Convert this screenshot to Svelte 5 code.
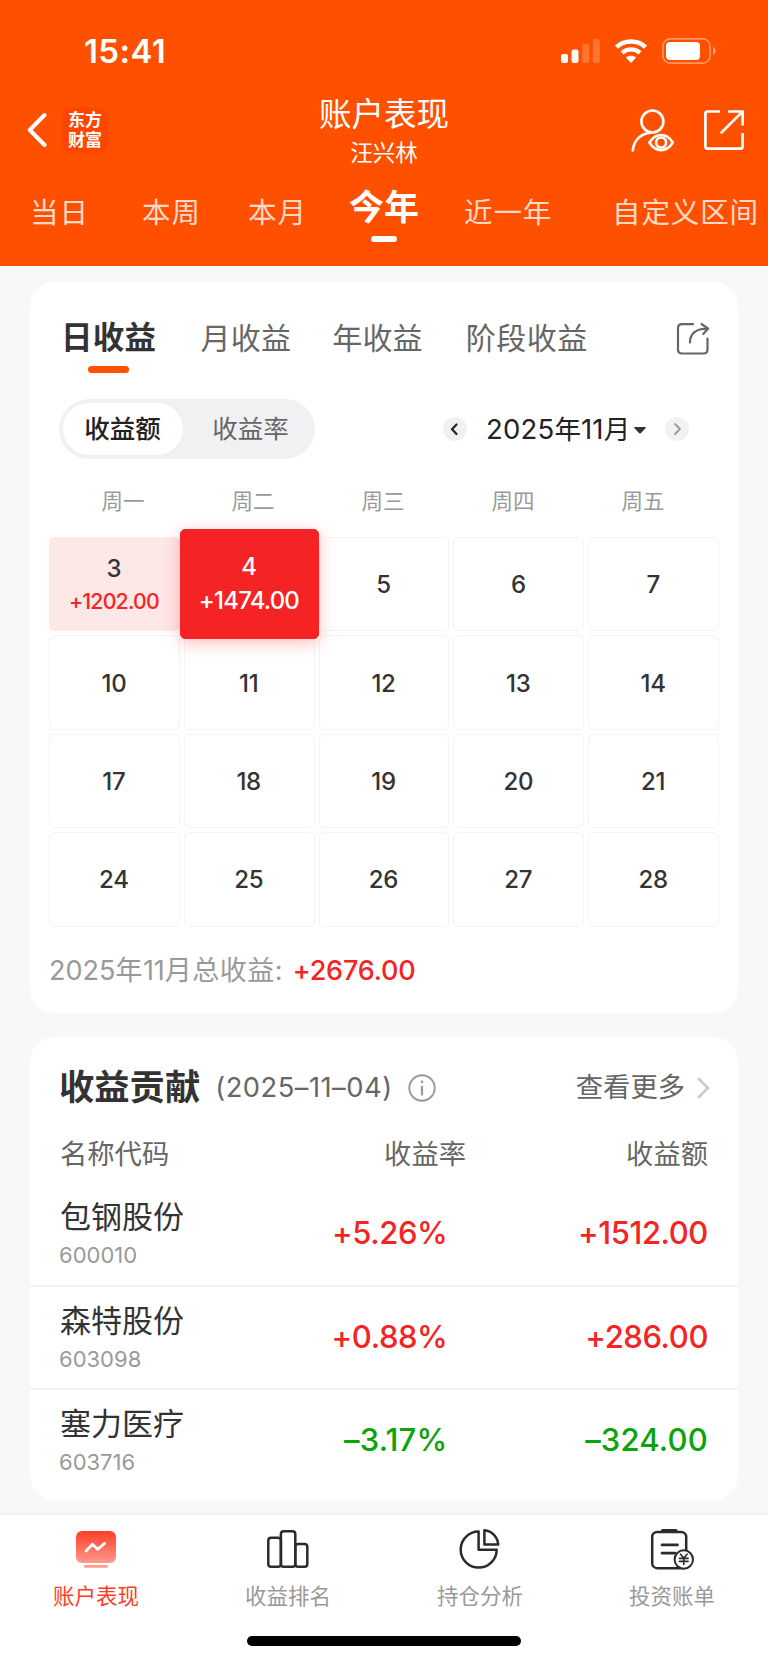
<script lang="ts">
  type Day = { day: number; amount?: string };
  type Stock = { name: string; code: string; rate: string; amount: string };

  const ranges = ['当日', '本周', '本月', '今年', '近一年', '自定义区间'];
  const periods = ['日收益', '月收益', '年收益', '阶段收益'];
  const modes = ['收益额', '收益率'];
  const weekdays = ['周一', '周二', '周三', '周四', '周五'];

  const days: Day[] = [3, 10, 17, 24].flatMap((start) =>
    Array.from({ length: 5 }, (_, i) => ({ day: start + i }))
  );
  days[0].amount = '+1202.00';
  days[1].amount = '+1474.00';

  const stocks: Stock[] = [
    { name: '包钢股份', code: '600010', rate: '+5.26%', amount: '+1512.00' },
    { name: '森特股份', code: '603098', rate: '+0.88%', amount: '+286.00' },
    { name: '塞力医疗', code: '603716', rate: '–3.17%', amount: '–324.00' }
  ];

  let range = $state('今年');
  let period = $state('日收益');
  let mode = $state('收益额');
  let selectedDay = $state(4);
</script>

<div class="screen">
  <header class="header">
    <div class="status-bar">
      <span class="time">15:41</span>
      <div class="status-icons">
        <svg class="signal" width="39" height="24" viewBox="0 0 39 24" fill="#fff">
          <rect x="0" y="15" width="7" height="9" rx="2" />
          <rect x="10.5" y="10.5" width="7" height="13.5" rx="2" />
          <rect x="21.2" y="5" width="7" height="19" rx="2" opacity="0.2" />
          <rect x="31.8" y="0" width="7" height="24" rx="2" opacity="0.2" />
        </svg>
        <svg class="wifi" width="34" height="24" viewBox="0 0 34 24">
          <path d="M2.5 8.2C10.5 0.6 23.5 0.6 31.5 8.2" fill="none" stroke="#fff" stroke-width="4.6" />
          <path d="M8 13.8C13.2 9.2 20.8 9.2 26 13.8" fill="none" stroke="#fff" stroke-width="4.4" />
          <path d="M11.9 18.6C14.8 16 19.2 16 22.1 18.6L17 24Z" fill="#fff" />
        </svg>
        <svg class="battery" width="55" height="26" viewBox="0 0 55 26">
          <rect x="0.9" y="0.9" width="47.2" height="24.2" rx="7.2" fill="none" stroke="#fff" stroke-opacity="0.4" stroke-width="1.6" />
          <rect x="4" y="4" width="34" height="18" rx="4" fill="#fff" />
          <path d="M51 9C54.6 10.4 54.6 15.6 51 17Z" fill="#fff" opacity="0.45" />
        </svg>
      </div>
    </div>

    <div class="nav">
      <div class="nav-side">
        <svg class="back" width="20" height="36" viewBox="0 0 20 36" fill="none" stroke="#fff" stroke-width="4" stroke-linecap="round" stroke-linejoin="round">
          <path d="M17.5 3L2.8 18L17.5 33" />
        </svg>
        <div class="logo">
          <span>东方</span>
          <span>财富</span>
        </div>
      </div>
      <div class="nav-title">
        <h1>账户表现</h1>
        <p>汪兴林</p>
      </div>
      <div class="nav-side right">
        <svg width="44" height="44" viewBox="0 0 44 44" fill="none" stroke="#fff" stroke-width="2.6" stroke-linecap="round">
          <circle cx="21.4" cy="13.5" r="11" />
          <path d="M1.8 42.5C2.6 33 9.1 25.5 19.6 24.6" />
          <path d="M18.4 34.5C24.6 24.4 35.6 24.4 41.8 34.5C35.6 44.6 24.6 44.6 18.4 34.5Z" stroke-linejoin="round" />
          <circle cx="30.1" cy="34.5" r="5" />
        </svg>
        <svg class="open" width="40" height="40" viewBox="0 0 40 40" fill="none" stroke="#fff" stroke-width="2.7" stroke-linecap="butt">
          <path d="M16 1.5H3.5Q1.4 1.5 1.4 3.5V36.5Q1.4 38.6 3.5 38.6H36.5Q38.6 38.6 38.6 36.5V23" />
          <path d="M24 1.5H38.6V15.5" />
          <path d="M37.5 2.6L17.5 22.5" stroke-linecap="round" />
        </svg>
      </div>
    </div>

    <nav class="ranges">
      {#each ranges as item}
        <button class="range" class:active={range === item} onclick={() => (range = item)}>{item}</button>
      {/each}
    </nav>
  </header>

  <main class="content">
    <section class="card calendar-card">
      <div class="periods">
        {#each periods as item}
          <button class="period" class:active={period === item} onclick={() => (period = item)}>{item}</button>
        {/each}
        <svg class="share" width="34" height="34" viewBox="0 0 34 34" fill="none" stroke="#666" stroke-width="2.2" stroke-linecap="round" stroke-linejoin="round">
          <path d="M17 2.2H6Q2 2.2 2 6.2V27.5Q2 31.5 6 31.5H27.5Q31.5 31.5 31.5 27.5V16.5" />
          <path d="M14 20.5C14 11.5 20 6.6 31.5 6.6" />
          <path d="M25.5 2L32.2 6.6L27.2 12" />
        </svg>
      </div>

      <div class="toolbar">
        <div class="segment">
          {#each modes as item}
            <button class="segment-item" class:active={mode === item} onclick={() => (mode = item)}>{item}</button>
          {/each}
        </div>
        <div class="month">
          <button class="month-btn" aria-label="上个月">
            <svg width="24" height="24" viewBox="0 0 24 24" fill="none" stroke="#222" stroke-width="2.2" stroke-linecap="round" stroke-linejoin="round">
              <path d="M13.5 7.5L9 12.2L13.5 17" />
            </svg>
          </button>
          <span class="month-label">2025<i>年</i>11<i>月</i></span>
          <svg class="caret" width="12" height="7" viewBox="0 0 12 7"><path d="M1 0H11Q12.4 0.3 11.5 1.3L7 6Q6 7 5 6L0.5 1.3Q-0.4 0.3 1 0Z" fill="#333" /></svg>
          <button class="month-btn" aria-label="下个月">
            <svg width="24" height="24" viewBox="0 0 24 24" fill="none" stroke="#999" stroke-width="1.8" stroke-linecap="round" stroke-linejoin="round">
              <path d="M10 7L15 12L10 17" />
            </svg>
          </button>
        </div>
      </div>

      <div class="weekdays">
        {#each weekdays as name}
          <span>{name}</span>
        {/each}
      </div>

      <div class="days">
        {#each days as item}
          <button
            class="day"
            class:gain={item.amount}
            class:selected={selectedDay === item.day}
            onclick={() => (selectedDay = item.day)}
          >
            <span class="num">{item.day}</span>
            {#if item.amount}
              <span class="amount">{item.amount}</span>
            {/if}
          </button>
        {/each}
      </div>

      <p class="total"><span>2025<i>年</i>11<i>月总收益</i>:</span><strong>+2676.00</strong></p>
    </section>

    <section class="card stock-card">
      <div class="stock-title">
        <h2>收益贡献</h2>
        <span class="date">(2025–11–04)</span>
        <svg class="info" width="28" height="28" viewBox="0 0 28 28" fill="none" stroke="#999" stroke-width="1.9">
          <circle cx="14" cy="14" r="12.7" />
          <path d="M14 12V21.5" stroke-width="2.2" />
          <circle cx="14" cy="7.8" r="1.4" fill="#999" stroke="none" />
        </svg>
        <span class="more">查看更多</span>
        <svg class="more-arrow" width="13" height="22" viewBox="0 0 13 22" fill="none" stroke="#ccc" stroke-width="2.8">
          <path d="M1.2 1.2L10.8 11L1.2 20.8" />
        </svg>
      </div>

      <div class="row head">
        <span>名称代码</span>
        <span class="cell">收益率</span>
        <span class="cell">收益额</span>
      </div>

      {#each stocks as stock}
        <div class="row" class:loss={stock.rate.startsWith('–')}>
          <div class="stock">
            <div class="name">{stock.name}</div>
            <div class="code">{stock.code}</div>
          </div>
          <span class="cell value">{stock.rate}</span>
          <span class="cell value">{stock.amount}</span>
        </div>
      {/each}
    </section>
  </main>

  <footer class="tabbar">
    <div class="tabs">
      <div class="tab active">
        <svg width="44" height="44" viewBox="0 0 44 44">
          <defs>
            <linearGradient id="tab-fill" x1="0" y1="0" x2="0" y2="1">
              <stop offset="0" stop-color="#ff3d28" />
              <stop offset="1" stop-color="#ff9a8c" />
            </linearGradient>
          </defs>
          <rect x="2" y="4" width="40" height="32" rx="6" fill="url(#tab-fill)" />
          <rect x="10" y="38" width="24" height="2.8" rx="1.4" fill="#ff9a8c" />
          <path d="M12 24L18.5 17.3L23.5 22.3L30.5 16.5" fill="none" stroke="#fff" stroke-width="2.8" stroke-linecap="round" stroke-linejoin="round" />
        </svg>
        <span>账户表现</span>
      </div>
      <div class="tab">
        <svg width="44" height="44" viewBox="0 0 44 44" fill="none" stroke="#2b2b2b" stroke-width="2.5">
          <rect x="2.3" y="10.7" width="12.6" height="29" rx="2.8" />
          <rect x="14.9" y="4.3" width="14.4" height="35.4" rx="2.8" />
          <rect x="29.3" y="17" width="12" height="22.7" rx="2.8" />
        </svg>
        <span>收益排名</span>
      </div>
      <div class="tab">
        <svg width="44" height="44" viewBox="0 0 44 44" fill="none" stroke="#2b2b2b" stroke-width="2.5" stroke-linejoin="round">
          <path d="M20.6 4.6V22.7H38.7A18 18 0 1 1 20.6 4.6Z" />
          <path d="M26.4 3.2A15.4 15.4 0 0 1 40.2 17.6H26.4Z" />
        </svg>
        <span>持仓分析</span>
      </div>
      <div class="tab">
        <svg width="44" height="44" viewBox="0 0 44 44" fill="none" stroke="#2b2b2b" stroke-width="2.5" stroke-linecap="round">
          <rect x="2.2" y="5" width="34" height="36.2" rx="5" />
          <path d="M12.5 3.6H26" stroke-width="3" />
          <path d="M12 17.9H27.5M12 26.2H25" stroke-width="2.7" />
          <circle cx="33.8" cy="32.5" r="9.2" fill="#fff" stroke-width="2" />
          <path d="M30.5 27.2L33.8 31L37.1 27.2M33.8 31V37.5M29.5 31.4H38.1M29.5 34.4H38.1" stroke-width="1.6" />
        </svg>
        <span>投资账单</span>
      </div>
    </div>
    <div class="home-indicator"></div>
  </footer>
</div>

<style>
  :global(body) {
    margin: 0;
  }

  .screen {
    width: 768px;
    height: 1663px;
    overflow: hidden;
    display: flex;
    flex-direction: column;
    background: #f6f8fa;
    color: #333;
    font-family: Inter, 'Noto Sans CJK SC', sans-serif;
    font-weight: 370;
  }

  .screen :is(h1, h2, p) {
    margin: 0;
    font-weight: inherit;
  }

  .screen i {
    font-style: normal;
  }

  button {
    border: 0;
    padding: 0;
    background: none;
    color: inherit;
    font: inherit;
    white-space: nowrap;
  }

  svg {
    display: block;
    flex: none;
  }

  /* Header */
  .header {
    height: 266px;
    flex: none;
    background: #ff5000;
    color: #fff;
  }

  .status-bar {
    display: flex;
    justify-content: space-between;
    height: 64px;
    padding: 38px 51px 0 84px;
    box-sizing: border-box;
  }

  .time {
    font-size: 33px;
    line-height: 27px;
    letter-spacing: 0.4px;
    font-weight: 600;
  }

  .status-icons {
    display: flex;
    align-items: center;
  }

  .wifi {
    margin-left: 14px;
  }

  .battery {
    margin-left: 14px;
  }

  .nav {
    display: flex;
    justify-content: space-between;
    height: 106px;
    padding: 0 24px;
  }

  .nav-side {
    display: flex;
    align-items: center;
    width: 200px;
    height: 46px;
    margin-top: 43px;
  }

  .nav-side.right {
    justify-content: flex-end;
  }

  .back {
    margin-left: 3px;
  }

  .open {
    margin-left: 29px;
  }

  .logo {
    display: flex;
    flex-direction: column;
    align-items: center;
    width: 46px;
    height: 46px;
    margin-left: 15px;
    padding-top: 4px;
    box-sizing: border-box;
    border-radius: 9px;
    background: #ff4600;
    font-size: 17px;
    font-weight: 700;
    line-height: 19.5px;
  }

  .nav-title {
    text-align: center;
    padding-top: 31px;
  }

  .nav-title h1 {
    font-size: 32.5px;
    line-height: 40px;
  }

  .nav-title p {
    font-size: 22.5px;
    line-height: 36px;
  }

  .ranges {
    display: grid;
    grid-template-columns: 112px 106px 101px 115px 148px auto;
    padding-left: 30px;
    height: 96px;
  }

  .range {
    padding-top: 23px;
    height: 63px;
    font-size: 28.5px;
    line-height: 40px;
    letter-spacing: 0.9px;
    text-align: left;
    color: rgba(255, 255, 255, 0.8);
  }

  .range.active {
    width: 70px;
    padding-top: 17px;
    height: 72px;
    font-size: 35px;
    font-weight: 700;
    letter-spacing: 0;
    color: #fff;
  }

  .range.active::after {
    content: '';
    display: block;
    width: 26px;
    height: 6px;
    margin: 9px auto 0;
    border-radius: 3px;
    background: #fff;
  }

  /* Cards */
  .content {
    flex: 1;
    display: flex;
    flex-direction: column;
    gap: 24px;
    padding: 16px 30px 0;
  }

  .card {
    border-radius: 24px;
    background: #fff;
    box-sizing: border-box;
  }

  .calendar-card {
    height: 731px;
    padding: 0 19px;
  }

  .periods {
    display: flex;
    align-items: flex-start;
    height: 117px;
    padding: 36px 9px 0 12px;
    box-sizing: border-box;
  }

  .period {
    margin-right: 41px;
    font-size: 30px;
    line-height: 40px;
    letter-spacing: 0.2px;
    text-align: left;
    color: #666;
  }

  .period:nth-child(3) {
    margin-right: 43px;
  }

  .period:nth-child(4) {
    letter-spacing: 0.5px;
  }

  .period.active {
    margin-right: 44.5px;
    font-size: 31.5px;
    font-weight: 600;
    color: #333;
  }

  .period.active::after {
    content: '';
    display: block;
    width: 41px;
    height: 7px;
    margin: 8px auto 0;
    border-radius: 3.5px;
    background: #ff5000;
  }

  .share {
    margin: 4px 0 0 auto;
  }

  .toolbar {
    display: flex;
    justify-content: space-between;
    align-items: center;
    height: 60px;
    padding: 0 30px 0 10px;
  }

  .segment {
    display: flex;
    width: 256px;
    height: 60px;
    padding: 4px;
    box-sizing: border-box;
    border-radius: 30px;
    background: #f1f1f4;
  }

  .segment-item {
    flex: 1;
    padding-left: 7px;
    font-size: 25.5px;
    line-height: 52px;
    color: #666;
  }

  .segment-item.active {
    flex: 0 0 120px;
    padding: 0 1px 0 0;
    border-radius: 26px;
    background: #fff;
    font-weight: 500;
    color: #222;
  }

  .month {
    display: flex;
    align-items: center;
  }

  .month-btn {
    width: 24px;
    height: 24px;
    border-radius: 50%;
    background: #f1f1f4;
  }

  .month-label {
    width: 142px;
    margin-left: 19px;
    font-size: 27.5px;
    line-height: 40px;
    letter-spacing: 0.2px;
    color: #222;
    white-space: nowrap;
  }

  .month-label i {
    font-size: 26.5px;
    letter-spacing: 0;
  }

  .caret {
    margin: 2px 19px 0 6px;
  }

  .weekdays {
    display: grid;
    grid-template-columns: repeat(5, 130px);
    margin-left: 9px;
    padding-top: 22px;
    height: 56px;
    font-size: 21.5px;
    line-height: 40px;
    text-align: center;
    color: #999;
  }

  .days {
    display: grid;
    grid-template-columns: repeat(5, 1fr);
    grid-auto-rows: 94.4px;
    gap: 4px;
  }

  .day {
    display: flex;
    flex-direction: column;
    align-items: center;
    justify-content: center;
    padding: 2px 1px 0 0;
    border: 1px solid #f4f4f5;
    border-radius: 5px;
    color: #333;
    letter-spacing: -0.3px;
  }

  .num {
    font-size: 24px;
    line-height: 32px;
    font-weight: 530;
  }

  .amount {
    font-size: 21.3px;
    line-height: 32px;
    letter-spacing: -0.8px;
    font-weight: 450;
    color: #f52323;
  }

  .day.gain {
    background: #fee7e7;
    border-color: #fee7e7;
  }

  .day.selected {
    z-index: 1;
    margin: -8px -4.5px -8px -4px;
    border-color: #f52323;
    background: #f52323;
    box-shadow: 0 4px 16px rgba(245, 35, 35, 0.3);
    color: #fff;
  }

  .day.selected .amount {
    font-size: 24px;
    line-height: 36px;
    font-weight: 500;
    color: #fff;
  }

  .total {
    display: flex;
    margin-top: 24px !important;
    font-size: 27px;
    line-height: 40px;
    color: #999;
  }

  .total i {
    letter-spacing: 0.5px;
  }

  .total strong {
    margin-left: 10px;
    letter-spacing: -0.2px;
    font-weight: 520;
    color: #f52323;
  }

  .stock-card {
    height: 463px;
    overflow: hidden;
  }

  .stock-title {
    display: flex;
    align-items: center;
    height: 102px;
    padding: 0 28px 0 29px;
    box-sizing: border-box;
    line-height: 40px;
    color: #666;
  }

  .stock-title h2 {
    font-size: 35.3px;
    font-weight: 700;
    color: #333;
  }

  .date {
    margin-left: 15px;
    font-size: 27.3px;
    letter-spacing: 0.5px;
    white-space: nowrap;
  }

  .info {
    margin-left: 15px;
  }

  .more {
    margin-left: auto;
    font-size: 27.3px;
  }

  .more-arrow {
    margin-left: 12px;
  }

  .row {
    display: grid;
    grid-template-columns: 1fr 200px 262px;
    align-items: center;
    height: 103.2px;
    padding: 0 30px;
    box-sizing: border-box;
  }

  .row + .row + .row {
    border-top: 2px solid #f1f2f4;
  }

  .row.head {
    height: 32px;
    margin-bottom: 10.5px;
    font-size: 27.3px;
    line-height: 32px;
    color: #666;
  }

  .cell {
    text-align: right;
  }

  .row .cell:nth-child(2) {
    margin-right: -1.5px;
  }

  .row.head .cell:nth-child(2) {
    margin-right: -20px;
  }

  .stock {
    padding-top: 4px;
  }

  .name {
    font-size: 31px;
    line-height: 40px;
  }

  .code {
    margin-left: -1px;
    font-size: 22px;
    line-height: 36px;
    color: #999;
  }

  .value {
    padding-bottom: 1px;
    font-size: 31px;
    letter-spacing: -0.4px;
    font-weight: 540;
    color: #f52323;
  }

  .loss .value {
    letter-spacing: 0.2px;
    color: #0aa30a;
  }

  /* Bottom bar */
  .tabbar {
    height: 150px;
    flex: none;
    box-sizing: border-box;
    border-top: 2px solid #eff0f2;
    background: #fff;
  }

  .tabs {
    display: grid;
    grid-template-columns: repeat(4, 1fr);
    height: 121px;
  }

  .tab {
    display: flex;
    flex-direction: column;
    align-items: center;
    padding-top: 12px;
    font-size: 21.5px;
    line-height: 40px;
    color: #999;
  }

  .tab span {
    margin-top: 5px;
  }

  .tab.active {
    color: #ff3d28;
  }

  .home-indicator {
    width: 274px;
    height: 10px;
    margin: 0 auto;
    border-radius: 5px;
    background: #000;
  }
</style>
